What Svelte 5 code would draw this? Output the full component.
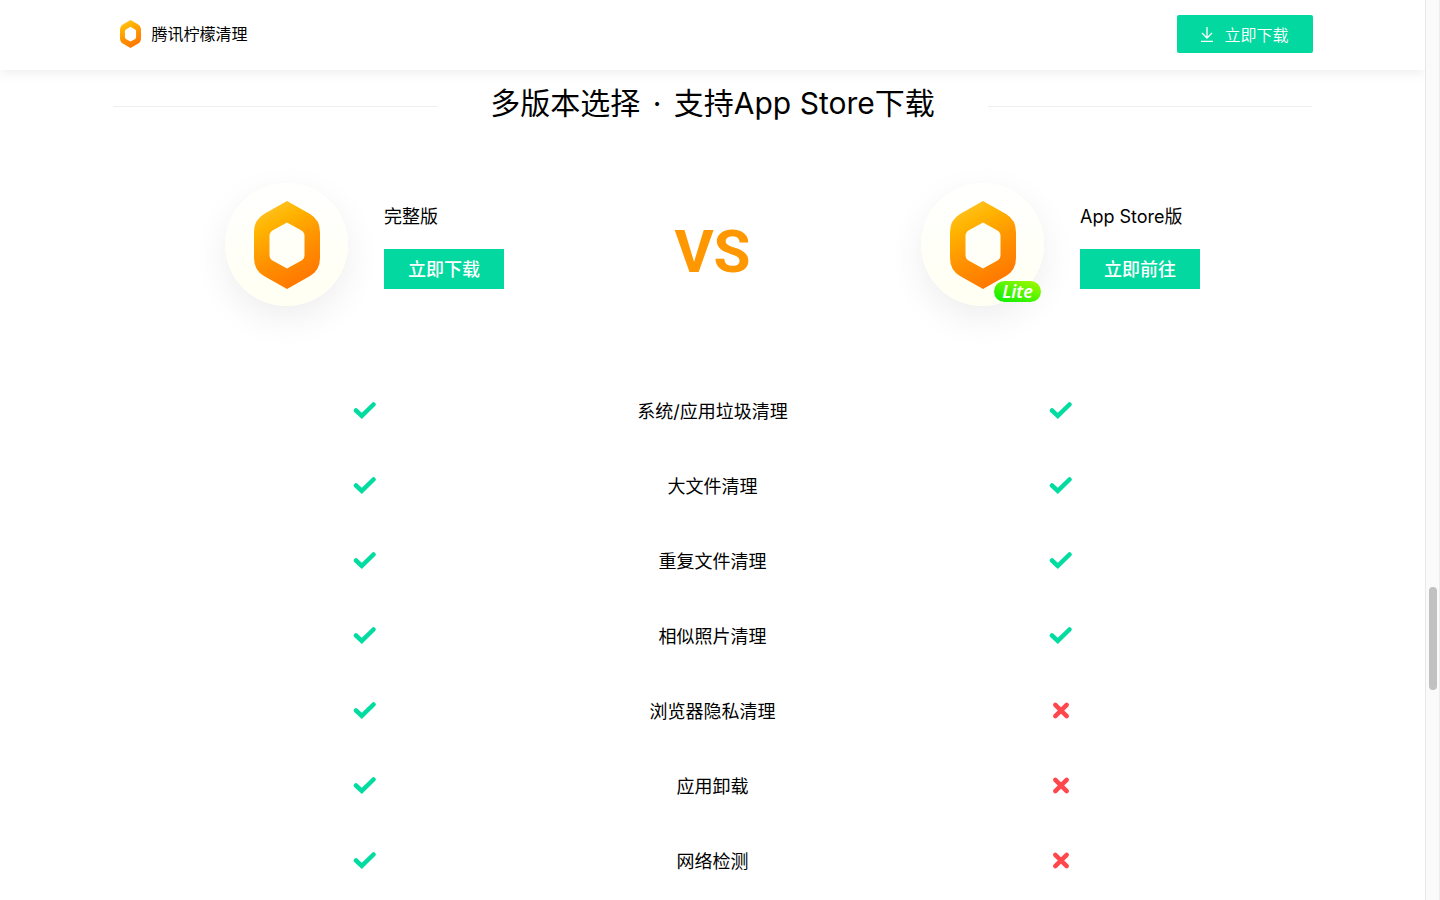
<script>
  // 版本对比页
  const features = [
    { name: '系统/应用垃圾清理', full: true, lite: true },
    { name: '大文件清理', full: true, lite: true },
    { name: '重复文件清理', full: true, lite: true },
    { name: '相似照片清理', full: true, lite: true },
    { name: '浏览器隐私清理', full: true, lite: false },
    { name: '应用卸载', full: true, lite: false },
    { name: '网络检测', full: true, lite: false }
  ];
</script>

<!-- 柠檬图标 -->
{#snippet lemon(id)}
  <svg class="lemon" viewBox="0 0 66 88" aria-hidden="true">
    <defs>
      <linearGradient id={id} x1="0.2" y1="0" x2="0.6" y2="1">
        <stop offset="0" stop-color="#ffc62d" />
        <stop offset="0.25" stop-color="#ffb400" />
        <stop offset="0.6" stop-color="#ff9200" />
        <stop offset="1" stop-color="#ff7600" />
      </linearGradient>
    </defs>
    <path
      fill="url(#{id})"
      fill-rule="evenodd"
      d="M33 0L56 13Q66 19 66 31V57Q66 69 56 75L33 88L10 75Q0 69 0 57V31Q0 19 10 13ZM33 21.500L18.500 29.500Q15.500 31.500 15.500 35V54Q15.500 57.500 18.500 59.500L33 67.500L47.500 59.500Q50.500 57.500 50.500 54V35Q50.500 31.500 47.500 29.500Z"
    />
  </svg>
{/snippet}

{#snippet mark(ok)}
  {#if ok}
    <svg class="mark" width="24" height="22" viewBox="0 0 24 22" role="img" aria-label="支持">
      <path d="M3 9.500L8.800 14.800L20.500 3.500" stroke="#03dca0" />
    </svg>
  {:else}
    <svg class="mark" width="24" height="22" viewBox="0 0 24 22" role="img" aria-label="不支持">
      <path d="M6.300 3.800L17.700 15.200M17.700 3.800L6.300 15.200" stroke="#ff474c" />
    </svg>
  {/if}
{/snippet}

<div class="layout">
  <div class="page">
    <header class="header">
      <div class="container header-inner">
        <a href="#top" class="brand">
          {@render lemon('lemon-brand')}
          <span>腾讯柠檬清理</span>
        </a>
        <button class="header-btn">
          <svg width="14" height="16" viewBox="0 0 14 16" aria-hidden="true">
            <path d="M7 1V11M2 7L7 12L12 7M1 15.500H13" />
          </svg>
          立即下载
        </button>
      </div>
    </header>

    <main class="container">
      <h2 class="title">
        <span>多版本选择 <i>·</i> 支持App Store下载</span>
      </h2>

      <table class="compare">
        <thead>
          <tr>
            <th class="side" scope="col">
              <div class="version">
                <div class="avatar">{@render lemon('lemon-full')}</div>
                <div class="info">
                  <p>完整版</p>
                  <button class="btn">立即下载</button>
                </div>
              </div>
            </th>
            <th class="vs">VS</th>
            <th class="side" scope="col">
              <div class="version">
                <div class="avatar">
                  {@render lemon('lemon-lite')}
                  <span class="badge">Lite</span>
                </div>
                <div class="info">
                  <p>App Store版</p>
                  <button class="btn">立即前往</button>
                </div>
              </div>
            </th>
          </tr>
        </thead>
        <tbody>
          {#each features as feature}
            <tr>
              <td>{@render mark(feature.full)}</td>
              <td>{feature.name}</td>
              <td>{@render mark(feature.lite)}</td>
            </tr>
          {/each}
        </tbody>
      </table>
    </main>
  </div>

  <!-- 滚动条 -->
  <div class="scrollbar" aria-hidden="true">
    <div class="thumb"></div>
  </div>
</div>

<style>
  .layout {
    display: flex;
    min-height: 100vh;
    background: #fff;
    color: #000;
    font-family: Inter, 'Noto Sans CJK SC', sans-serif;
  }

  .page {
    flex: 1;
    min-width: 0;
  }

  .container {
    max-width: 1200px;
    margin: 0 auto;
  }

  button {
    border: none;
    font-family: inherit;
    color: #fff;
    background: #02d8a0;
    cursor: pointer;
  }

  .header {
    position: sticky;
    top: 0;
    z-index: 1;
    background: #fff;
    box-shadow: 0 2px 12px rgba(0, 0, 0, 0.08);
  }

  .header-inner {
    display: flex;
    align-items: center;
    justify-content: space-between;
    height: 70px;
    padding-bottom: 2px;
    box-sizing: border-box;
  }

  .brand {
    display: flex;
    align-items: center;
    gap: 11px;
    margin-left: 7px;
    font-size: 16px;
    line-height: 24px;
    color: #000;
    text-decoration: none;
  }

  .brand .lemon {
    width: 21px;
    height: 28px;
  }

  .header-btn {
    display: flex;
    align-items: center;
    justify-content: center;
    gap: 10px;
    width: 136px;
    height: 38px;
    padding: 0 0 1px;
    border-radius: 2px;
    font-size: 16px;
    font-weight: 350;
  }

  .header-btn path {
    fill: none;
    stroke: #fff;
    stroke-width: 1.3;
  }

  .title {
    display: flex;
    align-items: center;
    justify-content: space-between;
    margin: 0;
    padding-top: 13px;
    font-size: 30px;
    font-weight: 400;
    line-height: 40px;
  }

  .title span {
    padding-bottom: 6px;
  }

  .title i {
    margin: 0 4px;
    font-style: normal;
  }

  .title::before,
  .title::after {
    content: '';
    width: 27%;
    height: 1px;
    background: #eee;
  }

  .compare {
    width: 100%;
    table-layout: fixed;
    border-collapse: collapse;
    text-align: center;
  }

  th {
    padding: 54px 0 68px;
    font-weight: 400;
  }

  .side {
    width: 42%;
  }

  .version {
    display: flex;
    align-items: center;
    justify-content: center;
    gap: 36px;
  }

  .avatar {
    position: relative;
    display: flex;
    align-items: center;
    justify-content: center;
    width: 123px;
    height: 123px;
    border-radius: 50%;
    background: linear-gradient(#fff, #fffff2);
    box-shadow: 0 12px 36px rgba(0, 0, 0, 0.07);
  }

  .avatar .lemon {
    width: 66px;
    height: 88px;
  }

  .badge {
    position: absolute;
    right: 3px;
    bottom: 4px;
    width: 47px;
    border-radius: 11px;
    background: linear-gradient(20deg, #00f000, #a8f800);
    color: #fff;
    font: italic 600 18px/21px 'Noto Sans', sans-serif;
  }

  .info {
    width: 120px;
    text-align: left;
  }

  .info p {
    margin: 0 0 16px;
    font-size: 18px;
    line-height: 32px;
    white-space: nowrap;
  }

  .btn {
    display: block;
    width: 120px;
    height: 40px;
    padding: 0 0 2px;
    font-size: 18px;
    font-weight: 500;
  }

  .compare .vs {
    padding-top: 68px;
    color: #ff9800;
    font: bold 60px/64px Roboto, sans-serif;
  }

  td {
    height: 75px;
    padding: 0;
    font-size: 18px;
    line-height: 26px;
  }

  .mark {
    display: block;
    margin: 0 auto;
  }

  .mark path {
    fill: none;
    stroke-width: 4.5;
    stroke-linecap: round;
  }

  .scrollbar {
    display: flex;
    flex-direction: column;
    align-items: center;
    width: 15px;
    height: 100vh;
    position: sticky;
    top: 0;
    z-index: 2;
    box-sizing: border-box;
    border-left: 1px solid #e8e8e8;
    border-right: 1px solid #ededed;
    background: #fafafa;
  }

  .thumb {
    width: 8px;
    height: 103px;
    margin-top: 587px;
    border-radius: 4px;
    background: #c1c1c1;
  }
</style>
